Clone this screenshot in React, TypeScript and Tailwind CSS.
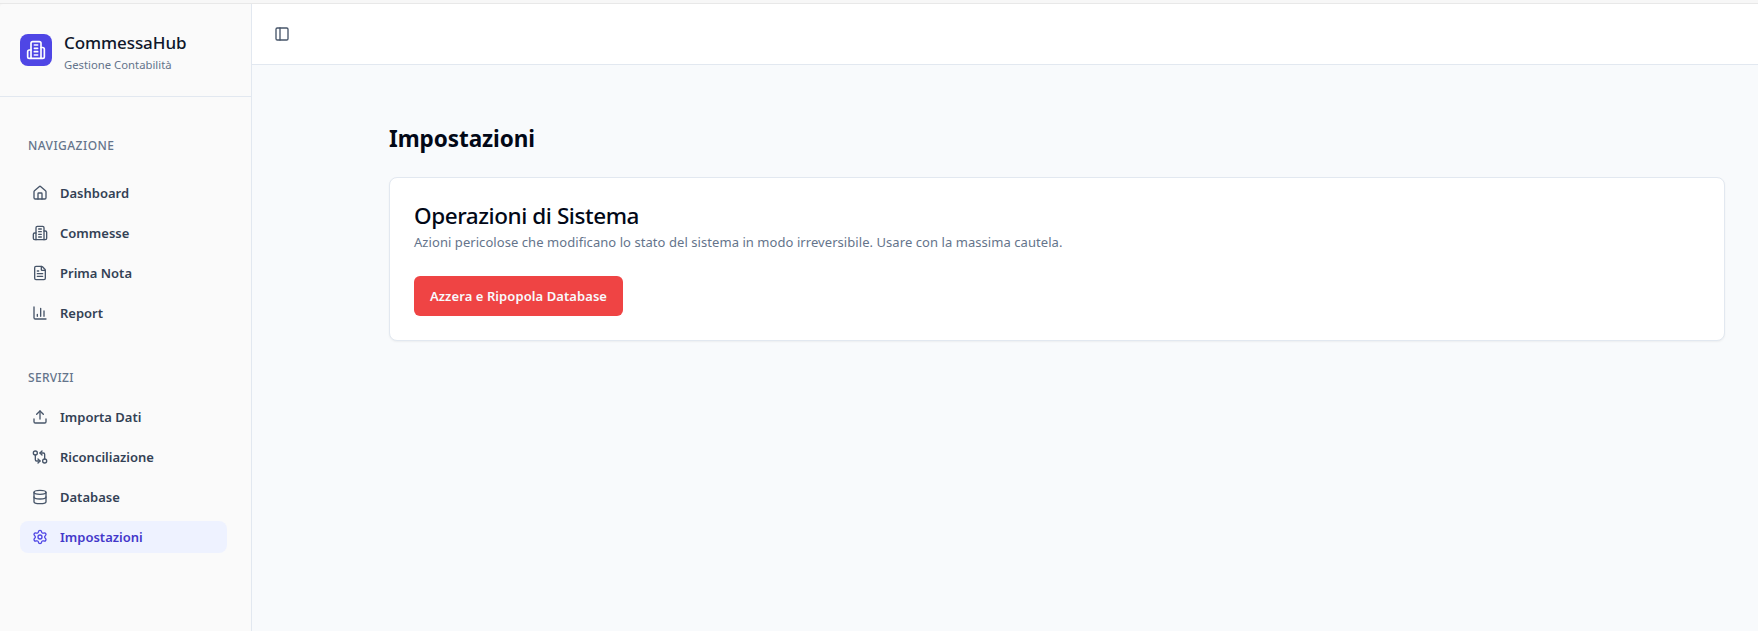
import type { ReactNode } from "react";
import { Database, FileText, GitCompareArrows, PanelLeft, Settings, Upload } from "lucide-react";

function Icon({ size = 16, children }: { size?: number; children: ReactNode }) {
  return (
    <svg width={size} height={size} viewBox="0 0 24 24" fill="none" stroke="currentColor" strokeWidth="2" strokeLinecap="round" strokeLinejoin="round" className="shrink-0">
      {children}
    </svg>
  );
}

function BuildingIcon({ size = 16 }: { size?: number }) {
  return (
    <Icon size={size}>
      <path d="M6 22V4a2 2 0 0 1 2-2h8a2 2 0 0 1 2 2v18Z" />
      <path d="M6 12H4a2 2 0 0 0-2 2v6a2 2 0 0 0 2 2h2" />
      <path d="M18 9h2a2 2 0 0 1 2 2v9a2 2 0 0 1-2 2h-2" />
      <path d="M10 6h4M10 10h4M10 14h4M10 18h4" />
    </Icon>
  );
}

function HomeIcon() {
  return (
    <Icon>
      <path d="M15 21v-8a1 1 0 0 0-1-1h-4a1 1 0 0 0-1 1v8" />
      <path d="M3 10a2 2 0 0 1 .709-1.528l7-5.999a2 2 0 0 1 2.582 0l7 5.999A2 2 0 0 1 21 10v9a2 2 0 0 1-2 2H5a2 2 0 0 1-2-2z" />
    </Icon>
  );
}

function ChartIcon() {
  return (
    <Icon>
      <path d="M3 3v16a2 2 0 0 0 2 2h16" />
      <path d="M18 17V9M13 17V5M8 17v-3" />
    </Icon>
  );
}

function NavItem({ icon, label, active = false }: { icon: ReactNode; label: string; active?: boolean }) {
  return (
    <li className={`flex h-8 items-center gap-3 rounded-lg px-3 text-[13px]/5 font-semibold ${active ? "bg-[#eef2ff] text-[#4338ca]" : "text-[#334155]"}`}>
      <span className={active ? "text-[#4f46e5]" : "text-[#475569]"}>{icon}</span>
      <span>{label}</span>
    </li>
  );
}

export default function App() {
  return (
    <div className="flex h-[631px] flex-col overflow-hidden bg-[#f5f5f5] font-['Noto_Sans',sans-serif] text-[#020817]">
      <div className="h-1 shrink-0 border-b border-[#e8e8e8] bg-[#f7f7f7]" />
      <div className="flex min-h-0 flex-1">
        <aside className="w-[252px] shrink-0 rounded-tl border-r border-[#e2e8f0] bg-[#fafafa]">
          <div className="flex h-[93px] items-start gap-3 border-b border-[#e2e8f0] px-5 pt-[30px]">
            <div className="flex size-8 items-center justify-center rounded-lg bg-[#4f46e5] text-white">
              <BuildingIcon size={20} />
            </div>
            <div className="-mt-[5px]">
              <div className="text-[17px]/7 font-medium tracking-[-0.08px] text-[#0f172a]">CommessaHub</div>
              <div className="text-[11.3px]/4 text-[#64748b]">Gestione Contabilità</div>
            </div>
          </div>
          <nav className="pr-6 pl-5">
            <div className="mt-[41px] flex h-4 items-center px-2 text-xs font-medium tracking-[0.45px] text-[#64748b]">NAVIGAZIONE</div>
            <ul className="mt-[23px] flex flex-col gap-2">
              <NavItem icon={<HomeIcon />} label="Dashboard" />
              <NavItem icon={<BuildingIcon />} label="Commesse" />
              <NavItem icon={<FileText size={16} />} label="Prima Nota" />
              <NavItem icon={<ChartIcon />} label="Report" />
            </ul>
            <div className="mt-[41px] flex h-4 items-center px-2 text-xs font-medium tracking-[0.3px] text-[#64748b]">SERVIZI</div>
            <ul className="mt-[15px] flex flex-col gap-2">
              <NavItem icon={<Upload size={16} />} label="Importa Dati" />
              <NavItem icon={<GitCompareArrows size={16} />} label="Riconciliazione" />
              <NavItem icon={<Database size={16} />} label="Database" />
              <NavItem icon={<Settings size={16} />} label="Impostazioni" active />
            </ul>
          </nav>
        </aside>
        <div className="flex min-w-0 flex-1 flex-col bg-[#f8fafc]">
          <header className="flex h-[61px] shrink-0 items-center border-b border-[#e2e8f0] bg-white px-[22px] text-[#475569]">
            <PanelLeft size={16} />
          </header>
          <main className="pt-14 pr-[33px] pl-[137px]">
            <h1 className="text-[22.5px]/9 font-bold tracking-[-0.06px]">Impostazioni</h1>
            <section className="mt-5 h-[164px] rounded-lg border border-[#e2e8f0] bg-white px-6 pt-6 shadow-[0_1px_2px_rgba(0,0,0,0.05)]">
              <h2 className="text-[22.5px]/7 font-medium tracking-[-0.43px]">Operazioni di Sistema</h2>
              <p className="mt-0.5 text-[13px]/5 tracking-[0.06px] text-[#64748b]">Azioni pericolose che modificano lo stato del sistema in modo irreversibile. Usare con la massima cautela.</p>
              <button className="mt-6 flex h-10 w-[209px] items-center justify-center rounded-md bg-[#ef4444] text-[13px]/5 font-semibold tracking-[0.08px] text-[#f8fafc]">Azzera e Ripopola Database</button>
            </section>
          </main>
        </div>
      </div>
    </div>
  );
}
